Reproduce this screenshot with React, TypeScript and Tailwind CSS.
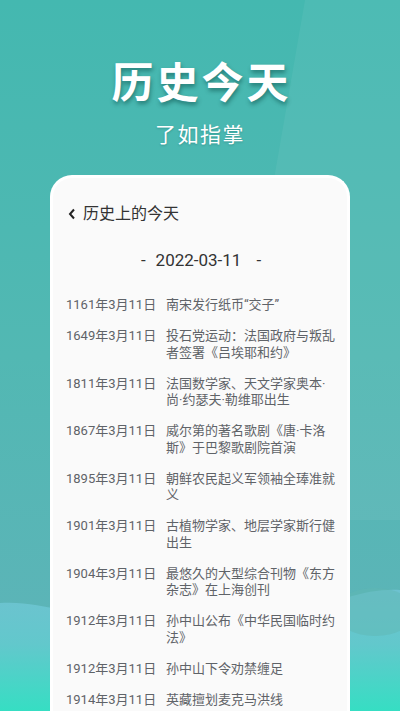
import React from 'react';

interface Event {
  date: string;
  lines: string[];
}

const events: Event[] = [
  { date: '1161年3月11日', lines: ['南宋发行纸币“交子”'] },
  { date: '1649年3月11日', lines: ['投石党运动：法国政府与叛乱', '者签署《吕埃耶和约》'] },
  { date: '1811年3月11日', lines: ['法国数学家、天文学家奥本·', '尚·约瑟夫·勒维耶出生'] },
  { date: '1867年3月11日', lines: ['威尔第的著名歌剧《唐·卡洛', '斯》于巴黎歌剧院首演'] },
  { date: '1895年3月11日', lines: ['朝鲜农民起义军领袖全琫准就', '义'] },
  { date: '1901年3月11日', lines: ['古植物学家、地层学家斯行健', '出生'] },
  { date: '1904年3月11日', lines: ['最悠久的大型综合刊物《东方', '杂志》在上海创刊'] },
  { date: '1912年3月11日', lines: ['孙中山公布《中华民国临时约', '法》'] },
  { date: '1912年3月11日', lines: ['孙中山下令劝禁缠足'] },
  { date: '1914年3月11日', lines: ['英藏擅划麦克马洪线'] },
];

const Background: React.FC = () => (
  <svg
    className="absolute inset-0 w-full h-full"
    viewBox="0 0 400 711"
    preserveAspectRatio="none"
  >
    <defs>
      <linearGradient id="bg" x1="0" y1="0" x2="0" y2="1">
        <stop offset="0" stopColor="#44b8b0" />
        <stop offset="0.5" stopColor="#52b8b3" />
        <stop offset="1" stopColor="#5fb3b9" />
      </linearGradient>
      <linearGradient id="wave" x1="0" y1="0" x2="0" y2="1">
        <stop offset="0" stopColor="#6ec2d0" />
        <stop offset="0.45" stopColor="#62c8cc" />
        <stop offset="1" stopColor="#36dec3" />
      </linearGradient>
    </defs>
    <rect x="0" y="0" width="400" height="711" fill="url(#bg)" />
    <polygon points="305,0 400,0 400,520 215,520" fill="#ffffff" opacity="0.05" />
    <path d="M0 603 C 40 600, 80 618, 120 620 L 300 620 C 330 600, 370 588, 400 590 L 400 711 L 0 711 Z" fill="url(#wave)" />
    <ellipse cx="375" cy="612" rx="40" ry="24" fill="#5fb8b4" opacity="0.5" />
  </svg>
);

export default function App() {
  return (
    <div
      className="relative h-[711px] w-[400px] overflow-hidden"
      style={{ fontFamily: 'Roboto, "Noto Sans CJK SC", sans-serif' }}
    >
      <Background />
      <div className="relative flex flex-col h-full">
        <div className="flex flex-col items-center pt-[63px]">
          <h1 className="text-[42px] leading-none font-bold text-white tracking-[3px] pl-[3px] [text-shadow:1px_3px_4px_rgba(0,60,55,0.45)]">
            历史今天
          </h1>
          <p className="mt-[20px] text-[21px] leading-none text-white tracking-[1.5px] [text-shadow:0_1px_2px_rgba(0,60,55,0.25)]">
            了如指掌
          </p>
        </div>

        <div className="mt-[29px] mx-[50px] flex-1 rounded-t-[22px] border-[3px] border-b-0 border-white bg-[#fafafa] pl-[13px] pr-[8px] pt-[24px]">
          <div className="flex items-center h-[24px] text-[#333]">
            <svg width="8" height="12" viewBox="0 0 8 12" className="ml-[2px]">
              <path d="M6 1.5 L2 6 L6 10.5" fill="none" stroke="#222" strokeWidth="2" />
            </svg>
            <span className="ml-[7px] text-[16px]">历史上的今天</span>
          </div>

          <div className="mt-[23px] flex justify-center items-center h-[24px] text-[17px] text-[#333] pr-[3px]">
            <span>-</span>
            <span className="ml-[10px]">2022-03-11</span>
            <span className="ml-[15px]">-</span>
          </div>

          <div className="mt-[24px] flex flex-col gap-[14.5px] text-[13px] leading-[16.5px] text-[#5f6368]">
            {events.map((e, i) => (
              <div key={i} className="flex">
                <div className="w-[100px] shrink-0 whitespace-nowrap">{e.date}</div>
                <div className="flex-1 whitespace-nowrap">
                  {e.lines.map((l, j) => (
                    <div key={j}>{l}</div>
                  ))}
                </div>
              </div>
            ))}
          </div>
        </div>
      </div>
    </div>
  );
}
